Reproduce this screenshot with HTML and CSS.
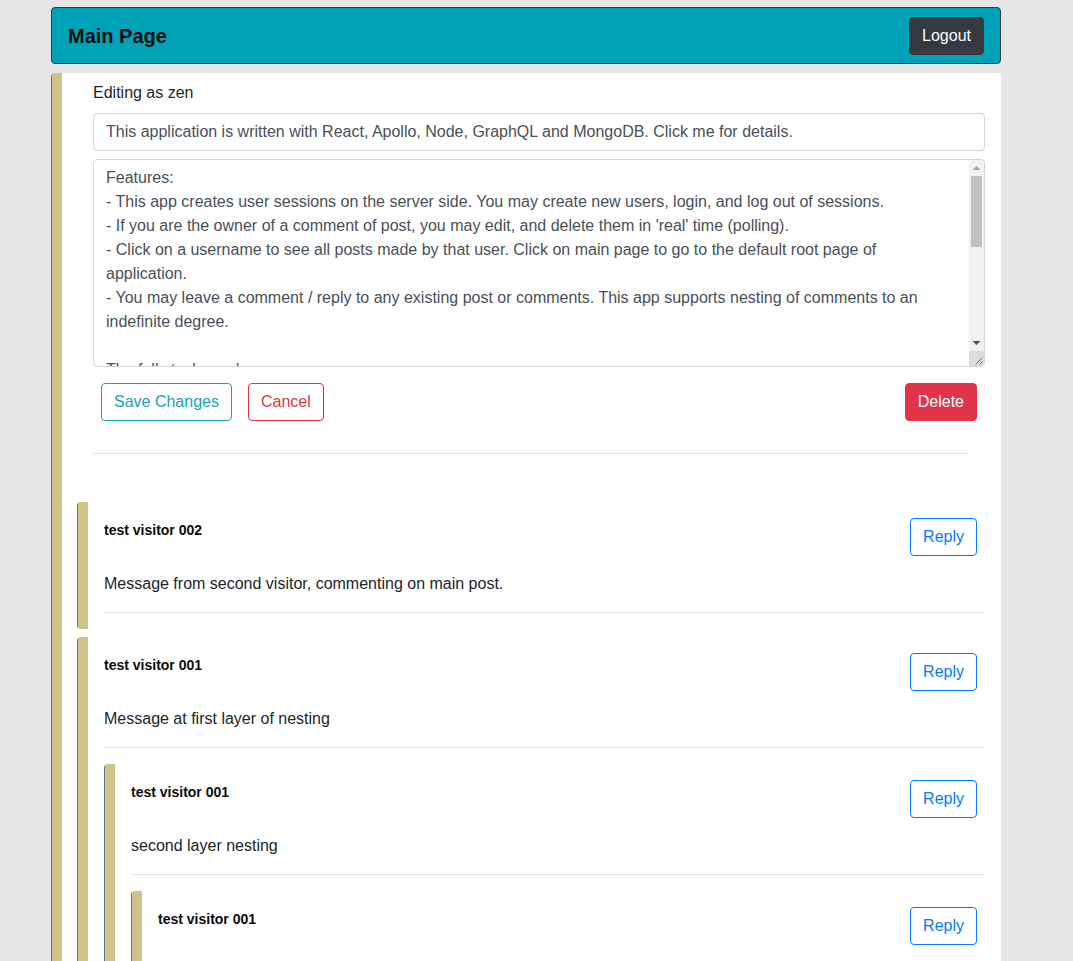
FILE: index.html
```html
<!DOCTYPE html>
<html lang="en">
<head>
<meta charset="utf-8">
<title>Main Page</title>
<link rel="stylesheet" href="styles.css">
</head>
<body>
<div class="page">
  <header class="topbar">
    <span class="brand">Main Page</span>
    <button class="btn btn-dark">Logout</button>
  </header>

  <main class="post">
    <section class="editor">
      <div class="label">Editing as zen</div>
      <input class="field title-input" type="text" value="This application is written with React, Apollo, Node, GraphQL and MongoDB. Click me for details.">
      <div class="textarea-wrap">
        <textarea class="field body-input">Features:
- This app creates user sessions on the server side. You may create new users, login, and log out of sessions.
- If you are the owner of a comment of post, you may edit, and delete them in 'real' time (polling).
- Click on a username to see all posts made by that user. Click on main page to go to the default root page of application.
- You may leave a comment / reply to any existing post or comments. This app supports nesting of comments to an indefinite degree.

The full stack used:
- React with Apollo Client on the front end.
- Node with Apollo Server and GraphQL on the back end.
- MongoDB for storing users, posts and comments.</textarea>
        <div class="vscroll" aria-hidden="true">
          <div class="sb-btn">
            <svg width="15" height="16" viewBox="0 0 15 16"><path d="M3.5 10 L7.5 6 L11.5 10 Z" fill="#a3a3a3"/></svg>
          </div>
          <div class="sb-track"><div class="sb-thumb"></div></div>
          <div class="sb-btn">
            <svg width="15" height="16" viewBox="0 0 15 16"><path d="M3.5 6 L11.5 6 L7.5 10 Z" fill="#505050"/></svg>
          </div>
          <div class="sb-corner">
            <svg width="15" height="15" viewBox="0 0 15 15"><path d="M13.5 6.5 L6.5 13.5 M13.5 10.5 L10.5 13.5" stroke="#777" stroke-width="1"/></svg>
          </div>
        </div>
      </div>
      <div class="actions">
        <button class="btn btn-outline-info">Save Changes</button>
        <button class="btn btn-outline-danger">Cancel</button>
        <span class="spacer"></span>
        <button class="btn btn-danger">Delete</button>
      </div>
      <hr class="divider">
    </section>

    <section class="comments">
      <div class="comment">
        <div class="comment-head">
          <span class="author">test visitor 002</span>
          <button class="btn btn-outline-primary">Reply</button>
        </div>
        <p class="msg">Message from second visitor, commenting on main post.</p>
        <hr class="rule">
      </div>

      <div class="comment">
        <div class="comment-head">
          <span class="author">test visitor 001</span>
          <button class="btn btn-outline-primary">Reply</button>
        </div>
        <p class="msg">Message at first layer of nesting</p>
        <hr class="rule">

        <div class="comment">
          <div class="comment-head">
            <span class="author">test visitor 001</span>
            <button class="btn btn-outline-primary">Reply</button>
          </div>
          <p class="msg">second layer nesting</p>
          <hr class="rule">

          <div class="comment">
            <div class="comment-head">
              <span class="author">test visitor 001</span>
              <button class="btn btn-outline-primary">Reply</button>
            </div>
            <p class="msg">third layer nesting</p>
            <hr class="rule">
          </div>
        </div>
      </div>
    </section>
  </main>
</div>
</body>
</html>
```

FILE: styles.css
```css
html {
  overflow: hidden;
}

body {
  margin: 0;
  background: #e6e6e6;
  font-family: "Liberation Sans", Arial, sans-serif;
  font-size: 16px;
  line-height: 24px;
  color: #212529;
}

.page {
  width: 950px;
  margin-left: 51px;
  padding-top: 7px;
}

.topbar {
  display: flex;
  align-items: center;
  justify-content: space-between;
  box-sizing: border-box;
  height: 57px;
  padding: 9px 16px 8px 16px;
  background: #00a2b8;
  border: 1px solid #2f3b42;
  border-radius: 4px;
}

.brand {
  font-size: 20px;
  font-weight: bold;
  color: #0b0b0b;
  line-height: 30px;
}

.btn {
  box-sizing: border-box;
  height: 38px;
  padding: 6px 12px;
  font-family: inherit;
  font-size: 16px;
  line-height: 24px;
  border: 1px solid transparent;
  border-radius: 4px;
  background: transparent;
  cursor: pointer;
}

.btn-dark {
  background: #343a40;
  border-color: #343a40;
  color: #fff;
}

.btn-outline-info {
  color: #17a2b8;
  border-color: #17a2b8;
}

.btn-outline-danger {
  color: #dc3545;
  border-color: #dc3545;
}

.btn-danger {
  background: #e1344a;
  border-color: #e1344a;
  color: #fff;
}

.btn-outline-primary {
  color: #007bff;
  border-color: #007bff;
}

.post {
  margin-top: 9px;
  min-height: 900px;
  border-radius: 4px;
  background: linear-gradient(90deg, #6c757d 0, #6c757d 1px, #cfc28b 1px, #cfc28b 11px, #fff 11px);
  padding-left: 11px;
  padding-bottom: 20px;
}

.editor {
  padding: 8px 16px 0 31px;
}

.label {
  line-height: 24px;
}

.field {
  display: block;
  box-sizing: border-box;
  width: 100%;
  padding: 6px 12px;
  font-family: inherit;
  font-size: 16px;
  line-height: 24px;
  color: #495057;
  background: #fff;
  border: 1px solid #ced4da;
  border-radius: 4px;
  margin: 0;
}

.title-input {
  height: 38px;
  margin-top: 8px;
}

.textarea-wrap {
  position: relative;
  margin-top: 8px;
}

.body-input {
  height: 208px;
  padding-right: 27px;
  overflow: hidden;
  resize: none;
}

.vscroll {
  position: absolute;
  top: 1px;
  right: 1px;
  bottom: 1px;
  width: 15px;
  display: flex;
  flex-direction: column;
  background: #f1f1f1;
  border-top-right-radius: 3px;
}

.sb-btn {
  height: 16px;
  flex: none;
}

.sb-btn svg,
.sb-corner svg {
  display: block;
}

.sb-track {
  flex: 1;
  padding: 0 2px 0 2px;
}

.sb-thumb {
  height: 71px;
  background: #c1c1c1;
}

.sb-corner {
  height: 15px;
  flex: none;
  background: #dcdcdc;
  border-bottom-right-radius: 3px;
}

.actions {
  display: flex;
  gap: 16px;
  margin-top: 16px;
  padding: 0 8px;
}

.spacer {
  flex: 1;
}

.divider {
  margin: 32px 16px 0 0;
  border: 0;
  border-top: 1px solid #e2e2e2;
  height: 0;
}

.comments {
  margin: 48px 16px 0 15px;
}

.comment {
  display: flow-root;
  border-radius: 4px 0 0 4px;
  background: linear-gradient(90deg, #6c757d 0, #6c757d 1px, #cfc28b 1px, #cfc28b 11px, #fff 11px);
  padding: 16px 0 0 27px;
  margin-bottom: 8px;
}

.comment-head {
  display: flex;
  justify-content: space-between;
  align-items: flex-start;
}

.comment-head .btn {
  margin-right: 8px;
}

.author {
  margin-top: 2px;
  font-size: 14px;
  font-weight: bold;
  line-height: 21px;
  color: #0b0b0b;
}

.msg {
  margin: 16px 0 16px 0;
  line-height: 24px;
}

.rule {
  margin: 0 0 16px 0;
  border: 0;
  border-top: 1px solid #e2e2e2;
  height: 0;
}
```
